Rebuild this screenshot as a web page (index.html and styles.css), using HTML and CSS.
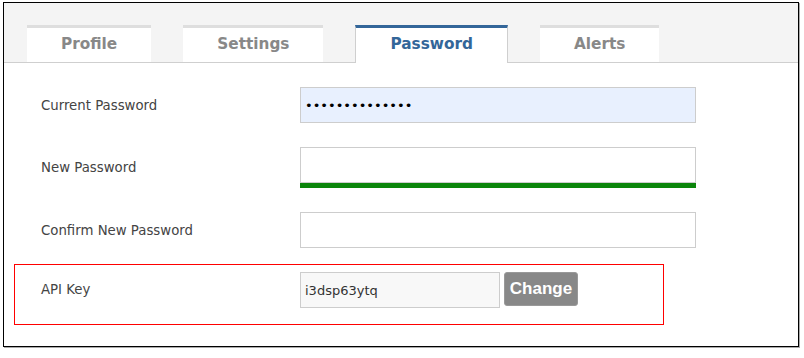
FILE: index.html
```html
<html>
<head>
    <title>Account - Password</title>
    <link rel="stylesheet" href="styles.css">
    <meta charset="UTF-8" />
</head>
<body>
<div class="panel">
    <div class="tabs">
        <div class="tab">Profile</div>
        <div class="tab">Settings</div>
        <div class="tab active">Password</div>
        <div class="tab">Alerts</div>
    </div>
    <div class="form">
        <div class="row">
            <label class="label" for="current">Current Password</label>
            <input class="field autofill" id="current" type="password" value="abcdefghijklmn" />
        </div>
        <div class="row">
            <label class="label" for="newpass">New Password</label>
            <div class="strength">
                <input class="field" id="newpass" type="password" value="" />
                <div class="bar"></div>
            </div>
        </div>
        <div class="row">
            <label class="label" for="confirm">Confirm New Password</label>
            <input class="field" id="confirm" type="password" value="" />
        </div>
        <div class="row api">
            <label class="label" for="apikey">API Key</label>
            <input class="field short" id="apikey" type="text" value="i3dsp63ytq" readonly />
            <button class="change">Change</button>
        </div>
    </div>
</div>
</body>
</html>
```

FILE: styles.css
```css
body {
margin: 0;
background: white;
font-family: "DejaVu Sans", Verdana, sans-serif;
}

.panel {
margin: 2px 0 0 3px;
width: 794px;
border: 1px solid #000;
box-shadow: 1px 1px 0 #aaa;
background: white;
}

.tabs {
display: flex;
align-items: flex-end;
gap: 32px;
height: 59px;
padding-left: 23px;
background-color: #f4f4f4;
border-bottom: 1px solid #cfcfcf;
}

.tab {
height: 34px;
line-height: 33px;
padding: 0 34px;
border-top: 3px solid #dedede;
background: white;
color: #888;
font-size: 15.3px;
font-weight: bold;
}

.tab.active {
color: #336699;
border-top-color: #336699;
border-left: 1px solid #cfcfcf;
border-right: 1px solid #cfcfcf;
height: 35px;
margin-bottom: -1px;
}

.form {
padding: 24px 0 21px 0;
}

.row {
display: flex;
align-items: center;
padding-left: 37px;
}

.row + .row {
margin-top: 24px;
}

.label {
width: 259px;
font-size: 13.3px;
color: #444;
}

.field {
box-sizing: border-box;
width: 396px;
height: 36px;
margin: 0;
padding: 0 4px;
border: 1px solid #cdcdcd;
background: white;
font-family: "DejaVu Sans", sans-serif;
font-size: 13px;
color: #333;
outline: none;
}

.autofill {
background-color: #e8f0fe;
color: #000;
}

.strength .bar {
width: 396px;
height: 5px;
background-color: #0b850b;
}

.row.api {
margin: 16px 0 0 10px;
padding: 7px 0 16px 26px;
box-sizing: border-box;
width: 650px;
border: 1px solid #f00;
align-items: flex-start;
}

.api .label {
line-height: 36px;
}

.field.short {
width: 200px;
background-color: #f8f8f8;
}

.change {
margin-left: 4px;
width: 74px;
height: 34px;
border: 1px solid #999;
border-radius: 3px;
background-color: #888;
color: white;
font-family: "Liberation Sans", Arial, sans-serif;
font-weight: bold;
font-size: 17px;
padding: 0;
}
```
